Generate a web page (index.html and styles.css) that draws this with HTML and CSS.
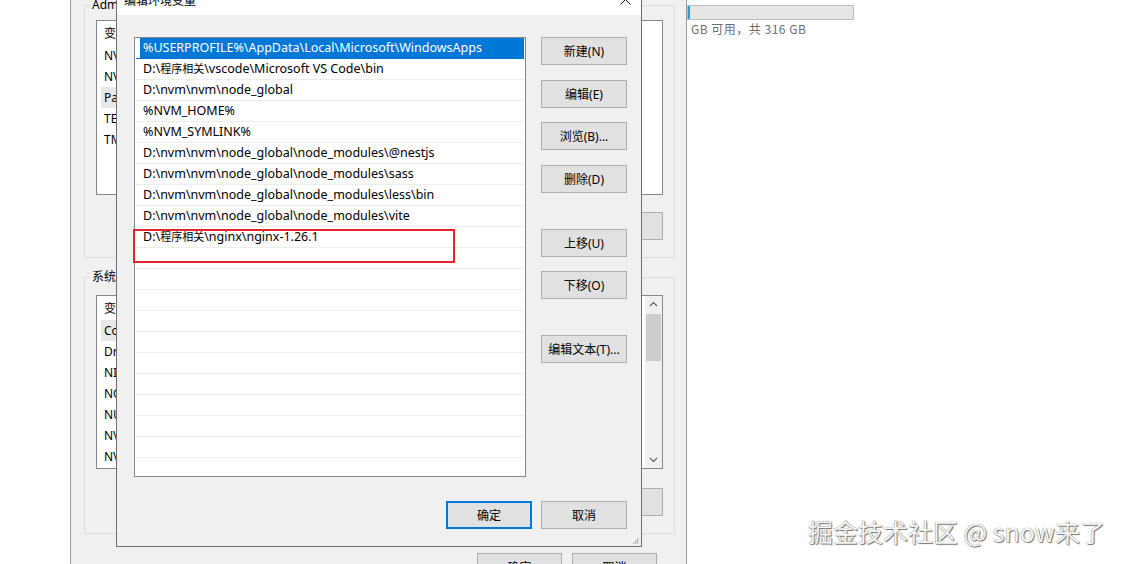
FILE: index.html
```html
<!DOCTYPE html>
<html lang="zh-CN">
<head>
<meta charset="utf-8">
<title>编辑环境变量</title>
<link rel="stylesheet" href="styles.css">
</head>
<body>
<div class="desktop">
  <div class="drive">
    <div class="drive-bar"><div class="drive-fill"></div></div>
    <div class="drive-text">GB 可用，共 316 GB</div>
  </div>

  <div class="env-window">
    <fieldset class="group group-user">
      <legend>Administrator 的用户变量(U)</legend>
      <div class="var-list">
        <div class="var-head"><span class="c-name">变量</span><span class="c-val">值</span></div>
        <div class="var-row"><span class="c-name">NVM_HOME</span><span class="c-val">D:\nvm\nvm</span></div>
        <div class="var-row"><span class="c-name">NVM_SYMLINK</span><span class="c-val">D:\nvm\nodejs</span></div>
        <div class="var-row is-active"><span class="c-name">Path</span><span class="c-val">%USERPROFILE%\AppData</span></div>
        <div class="var-row"><span class="c-name">TEMP</span><span class="c-val">%USERPROFILE%\Temp</span></div>
        <div class="var-row"><span class="c-name">TMP</span><span class="c-val">%USERPROFILE%\Temp</span></div>
      </div>
      <div class="group-buttons">
        <button class="btn btn-wide">新建(N)...</button>
        <button class="btn btn-wide">编辑(E)...</button>
        <button class="btn btn-wide">删除(D)</button>
      </div>
    </fieldset>

    <fieldset class="group group-sys">
      <legend>系统变量(S)</legend>
      <div class="var-list var-list-sys">
        <div class="var-rows">
          <div class="var-head"><span class="c-name">变量</span><span class="c-val">值</span></div>
          <div class="var-row is-active"><span class="c-name">ComSpec</span><span class="c-val">C:\Windows\system32</span></div>
          <div class="var-row"><span class="c-name">DriverData</span><span class="c-val">C:\Windows\System32</span></div>
          <div class="var-row"><span class="c-name">NIX_HOME</span><span class="c-val">C:\nix</span></div>
          <div class="var-row"><span class="c-name">NODE_PATH</span><span class="c-val">D:\nvm\node_global</span></div>
          <div class="var-row"><span class="c-name">NUMBER_OF_PROCESSORS</span><span class="c-val">16</span></div>
          <div class="var-row"><span class="c-name">NVM_HOME</span><span class="c-val">D:\nvm\nvm</span></div>
          <div class="var-row"><span class="c-name">NVM_SYMLINK</span><span class="c-val">D:\nvm\nodejs</span></div>
        </div>
        <div class="scrollbar">
          <svg class="sb-arrow" width="17" height="17" viewBox="0 0 17 17"><path d="M5 10 L8.5 6.5 L12 10" fill="none" stroke="#606060" stroke-width="1.2"/></svg>
          <div class="sb-track"><div class="sb-thumb"></div></div>
          <svg class="sb-arrow" width="17" height="17" viewBox="0 0 17 17"><path d="M5 7 L8.5 10.5 L12 7" fill="none" stroke="#606060" stroke-width="1.2"/></svg>
        </div>
      </div>
      <div class="group-buttons">
        <button class="btn btn-wide">新建(W)...</button>
        <button class="btn btn-wide">编辑(I)...</button>
        <button class="btn btn-wide">删除(L)</button>
      </div>
    </fieldset>

    <div class="window-buttons">
      <button class="btn btn-wide">确定</button>
      <button class="btn btn-wide">取消</button>
    </div>
  </div>

  <div class="edit-dialog">
    <div class="titlebar">
      <span class="title">编辑环境变量</span>
      <svg class="close" width="11" height="11" viewBox="0 0 11 11"><path d="M0.5 0.5 L10.5 10.5 M10.5 0.5 L0.5 10.5" stroke="#000" stroke-width="1"/></svg>
    </div>
    <div class="dialog-body">
      <div class="dialog-main">
        <div class="path-list">
          <div class="path-row is-selected">%USERPROFILE%\AppData\Local\Microsoft\WindowsApps</div>
          <div class="path-row">D:\<span class="cjk">程序相关</span>\vscode\Microsoft VS Code\bin</div>
          <div class="path-row">D:\nvm\nvm\node_global</div>
          <div class="path-row">%NVM_HOME%</div>
          <div class="path-row">%NVM_SYMLINK%</div>
          <div class="path-row">D:\nvm\nvm\node_global\node_modules\@nestjs</div>
          <div class="path-row">D:\nvm\nvm\node_global\node_modules\sass</div>
          <div class="path-row">D:\nvm\nvm\node_global\node_modules\less\bin</div>
          <div class="path-row">D:\nvm\nvm\node_global\node_modules\vite</div>
          <div class="path-row">D:\<span class="cjk">程序相关</span>\nginx\nginx-1.26.1</div>
          <div class="path-row"></div>
          <div class="path-row"></div>
          <div class="path-row"></div>
          <div class="path-row"></div>
          <div class="path-row"></div>
          <div class="path-row"></div>
          <div class="path-row"></div>
          <div class="path-row"></div>
          <div class="path-row"></div>
          <div class="path-row"></div>
          <div class="path-row"></div>
        </div>
        <div class="side-buttons">
          <button class="btn">新建(N)</button>
          <button class="btn gap-15">编辑(E)</button>
          <button class="btn gap-14">浏览(B)...</button>
          <button class="btn gap-15">删除(D)</button>
          <button class="btn gap-36">上移(U)</button>
          <button class="btn gap-14">下移(O)</button>
          <button class="btn gap-36">编辑文本(T)...</button>
        </div>
      </div>
      <div class="dialog-footer">
        <button class="btn btn-default">确定</button>
        <button class="btn">取消</button>
      </div>
    </div>
    <div class="mark-box"></div>
    <svg class="grip" width="6" height="6" viewBox="0 0 6 6">
      <rect x="4" y="0" width="1.5" height="1.5" fill="#b0b0b0"/>
      <rect x="2" y="2" width="1.5" height="1.5" fill="#b0b0b0"/>
      <rect x="4" y="2" width="1.5" height="1.5" fill="#b0b0b0"/>
      <rect x="0" y="4" width="1.5" height="1.5" fill="#b0b0b0"/>
      <rect x="2" y="4" width="1.5" height="1.5" fill="#b0b0b0"/>
      <rect x="4" y="4" width="1.5" height="1.5" fill="#b0b0b0"/>
    </svg>
  </div>

  <div class="watermark">掘金技术社区 @ snow来了</div>
</div>
</body>
</html>
```

FILE: styles.css
```css
* { box-sizing: border-box; }

html, body {
  margin: 0;
  padding: 0;
}

body {
  width: 1124px;
  height: 564px;
  overflow: hidden;
  background: #ffffff;
  font-family: "Noto Sans", "Noto Sans CJK SC", sans-serif;
  font-size: 12px;
  color: #000;
}

.desktop {
  position: relative;
  width: 1124px;
  height: 564px;
  overflow: hidden;
  background: #ffffff;
}

/* drive usage (window behind, right side) */
.drive {
  position: absolute;
  left: 687px;
  top: 5px;
}

.drive-bar {
  width: 167px;
  height: 15px;
  border: 1px solid #bcbcbc;
  background: #e6e6e6;
}

.drive-fill {
  width: 2px;
  height: 100%;
  background: #26a0da;
}

.drive-text {
  margin-top: 1px;
  padding-left: 4px;
  color: #6d6d6d;
  font-family: "Noto Sans CJK SC", sans-serif;
  font-size: 12px;
  letter-spacing: 0.5px;
  line-height: 16px;
  white-space: nowrap;
}

/* background window: 环境变量 */
.env-window {
  position: absolute;
  left: 70px;
  top: -20px;
  width: 617px;
  height: 600px;
  background: #f0f0f0;
  border-left: 1px solid #9a9a9a;
  border-right: 1px solid #9a9a9a;
  padding: 17px 11px 0 13px;
}

.group {
  margin: 0;
  min-width: 0;
  border: 1px solid #dcdcdc;
  padding: 7px 11px 17px 11px;
}

.group legend {
  padding: 0 2px;
  margin-left: -6px;
  font-size: 12px;
  line-height: 16px;
  white-space: nowrap;
}

.group-sys {
  margin-top: 11px;
  padding-top: 10px;
}

.var-list {
  height: 175px;
  background: #fff;
  border: 1px solid #828790;
  overflow: hidden;
}

.var-list-sys {
  height: 174px;
  display: flex;
}

.var-rows {
  flex: 1;
  min-width: 0;
}

.var-head {
  height: 24px;
  display: flex;
  align-items: center;
  padding-left: 7px;
}

.var-row {
  width: 500px;
  height: 21px;
  display: flex;
  align-items: center;
  margin-left: 4px;
  padding-left: 3px;
  white-space: nowrap;
}

.var-row.is-active {
  background: #e8e8e8;
}

.c-name {
  width: 200px;
  flex: none;
}

.c-val {
  flex: none;
}

.scrollbar {
  width: 17px;
  flex: none;
  background: #f0f0f0;
  display: flex;
  flex-direction: column;
}

.sb-arrow {
  display: block;
  flex: none;
}

.sb-track {
  flex: 1;
  padding: 1px 1px 0 1px;
}

.sb-thumb {
  height: 47px;
  background: #cdcdcd;
}

.group-buttons {
  display: flex;
  justify-content: flex-end;
  gap: 9px;
  margin-top: 17px;
}

.group-sys .group-buttons {
  margin-top: 19px;
}

.window-buttons {
  display: flex;
  justify-content: flex-end;
  gap: 10px;
  margin-top: 19px;
  margin-right: 18px;
}

/* buttons */
.btn {
  display: flex;
  align-items: center;
  justify-content: center;
  width: 86px;
  height: 28px;
  flex: none;
  padding: 0;
  margin: 0;
  border: 1px solid #adadad;
  background: #e1e1e1;
  color: #000;
  font-family: "Noto Sans", "Noto Sans CJK SC", sans-serif;
  font-size: 12px;
}

.btn-wide {
  width: 85px;
}

.btn-default {
  border: 2px solid #0078d7;
}

/* front dialog: 编辑环境变量 */
.edit-dialog {
  position: absolute;
  left: 116px;
  top: -17px;
  width: 526px;
  height: 564px;
  border: 1px solid #6f6f6f;
  background: #f0f0f0;
  display: flex;
  flex-direction: column;
}

.titlebar {
  height: 31px;
  flex: none;
  background: #ffffff;
  display: flex;
  align-items: center;
  justify-content: space-between;
  padding: 0 10px 0 7px;
}

.title {
  font-family: "Noto Sans CJK SC", sans-serif;
  font-size: 12px;
  color: #000;
  margin-top: -1px;
}

.close {
  display: block;
}

.dialog-body {
  flex: 1;
  display: flex;
  flex-direction: column;
  padding: 22px 14px 17px 17px;
}

.dialog-main {
  display: flex;
  gap: 15px;
  height: 440px;
  flex: none;
}

.path-list {
  width: 392px;
  height: 440px;
  flex: none;
  background: #ffffff;
  border: 1px solid #828790;
  padding: 0 1px;
  overflow: hidden;
}

.path-row {
  height: 21px;
  line-height: 20px;
  padding-left: 7px;
  border-bottom: 1px solid #ececec;
  white-space: nowrap;
  color: #000;
  font-size: 12.5px;
}

.path-row .cjk {
  font-size: 11px;
}

.path-row.is-selected {
  background: linear-gradient(to right, transparent 4px, #0078d7 4px);
  border-bottom-color: #0078d7;
  color: #ffffff;
}

.side-buttons {
  display: flex;
  flex-direction: column;
  width: 86px;
  flex: none;
}

.gap-14 { margin-top: 14px; }
.gap-15 { margin-top: 15px; }
.gap-36 { margin-top: 36px; }

.dialog-footer {
  display: flex;
  justify-content: flex-end;
  gap: 9px;
  margin-top: 24px;
}

.mark-box {
  position: absolute;
  left: 16px;
  top: 245px;
  width: 322px;
  height: 34px;
  border: 2px solid #e3262b;
}

.grip {
  position: absolute;
  right: 2px;
  bottom: 2px;
}

/* watermark */
.watermark {
  position: absolute;
  left: 808px;
  top: 515px;
  font-family: "Noto Sans CJK SC", sans-serif;
  font-size: 25px;
  line-height: 32px;
  color: #f7f7f7;
  white-space: nowrap;
  text-shadow: 0 0 1px #555, 1px 1px 1px #777;
}
```
